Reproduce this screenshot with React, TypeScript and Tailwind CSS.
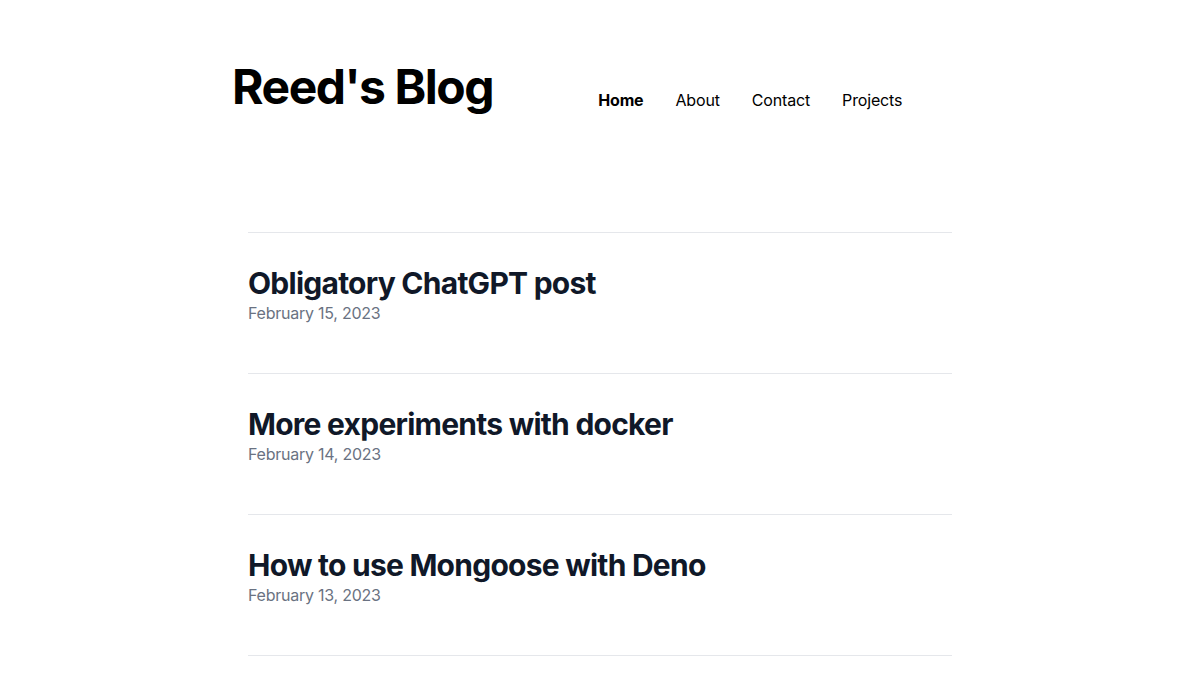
import React from 'react';

const posts = [
  { title: 'Obligatory ChatGPT post', date: 'February 15, 2023' },
  { title: 'More experiments with docker', date: 'February 14, 2023' },
  { title: 'How to use Mongoose with Deno', date: 'February 13, 2023' },
];

export default function App() {
  return (
    <div className="min-h-screen bg-white font-['Inter',sans-serif]">
      {/* header */}
      <header className="w-[736px] mx-auto pt-[63px] flex items-baseline">
        <h1 className="text-5xl leading-none font-bold text-black tracking-[-0.03em]">Reed's Blog</h1>
        <nav className="ml-[105px] relative top-[2px] flex gap-8 text-base text-black tracking-[-0.01em]">
          <a className="font-bold">Home</a>
          <a>About</a>
          <a>Contact</a>
          <a>Projects</a>
        </nav>
      </header>

      {/* post list */}
      <main className="w-[704px] mx-auto mt-[121px]">
        {posts.map((p) => (
          <article key={p.title} className="border-t border-gray-200 pt-8 pb-12">
            <h2 className="text-3xl font-bold text-gray-900 tracking-tight">{p.title}</h2>
            <p className="text-base text-gray-500 tracking-[-0.015em]">{p.date}</p>
          </article>
        ))}
        <div className="border-t border-gray-200"></div>
      </main>
    </div>
  );
}
